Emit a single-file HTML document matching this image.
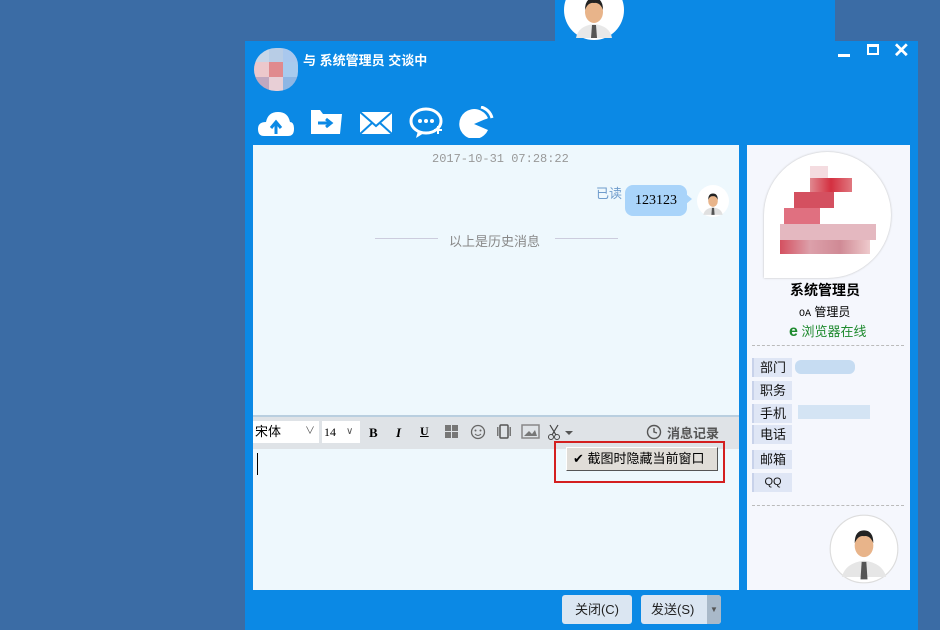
<!DOCTYPE html>
<html><head><meta charset="utf-8"><style>
*{margin:0;padding:0;box-sizing:border-box}
body{width:940px;height:630px;background:#3b6ca5;position:relative;overflow:hidden;font-family:"Liberation Sans","Noto Sans CJK SC",sans-serif;font-size:12px}
.abs{position:absolute}
.blue{background:#0b89e5}
.lbl{position:absolute;left:752px;width:40px;height:19px;background:#dfe6f5;border-left:2px solid #c8d2ea;font-size:13px;text-align:center;line-height:19px;color:#111}
.btn{position:absolute;top:595px;height:29px;background:#dbe6f2;border-radius:3px;font-size:13px;line-height:29px;text-align:center;color:#222}
</style></head><body>
<div class="abs blue" style="left:555px;top:0;width:280px;height:41px"></div>
<div class="abs blue" style="left:245px;top:41px;width:673px;height:589px"></div>
<!-- top avatar -->
<svg class="abs" style="left:564px;top:-20px" width="60" height="62" viewBox="0 0 60 62"><circle cx="30" cy="30" r="30" fill="#fff"/><path d="M12 58 Q14 46 30 44 Q46 46 48 58Z" fill="#e8e8e8"/><path d="M28 45 L32 45 L33 58 L27 58Z" fill="#555"/><ellipse cx="30" cy="32" rx="9" ry="11" fill="#e8b48a"/><path d="M21 30 Q21 18 30 18 Q39 18 39 30 Q36 22 30 23 Q24 22 21 30Z" fill="#222"/></svg>
<!-- window controls -->
<div class="abs" style="left:838px;top:54px;width:12px;height:3px;background:#fff"></div>
<div class="abs" style="left:867px;top:44px;width:12px;height:11px;border:2px solid #fff;border-top-width:3px"></div>
<div class="abs" style="left:893px;top:38px;color:#fff;font-size:20px;font-weight:bold">✕</div>
<!-- title avatar -->
<div class="abs" style="left:254px;top:48px;width:44px;height:43px;border-radius:50% 40% 45% 50%;overflow:hidden;display:grid;grid-template-columns:repeat(3,1fr)">
<div style="background:#c8d6e8"></div><div style="background:#b8cde6"></div><div style="background:#a9c8ee"></div>
<div style="background:#ecc8cc"></div><div style="background:#e08a8e"></div><div style="background:#a8cbee"></div>
<div style="background:#c0a8c0"></div><div style="background:#e8cfd6"></div><div style="background:#8eb6e4"></div></div>
<div class="abs" style="left:303px;top:50px;color:#fff;font-weight:bold;font-size:13px">与 系统管理员 交谈中</div>
<!-- toolbar icons -->
<svg class="abs" style="left:258px;top:106px" width="260" height="32" viewBox="0 0 260 32" fill="#fff">
<path d="M6 30 Q0 30 0 23 Q0 16 8 16 Q10 6 20 6 Q30 6 32 16 Q36 16 36 23 Q36 30 30 30Z"/><path d="M18 28 L18 18 M13 22 L18 16 L23 22" stroke="#0b89e5" stroke-width="3" fill="none"/>
<path d="M53 4 L62 4 L65 8 L84 8 L82 28 L53 28Z"/><path d="M60 17 L72 17 M68 13 L73 17 L68 21" stroke="#0b89e5" stroke-width="3" fill="none"/>
<rect x="102" y="6" width="32" height="22"/><path d="M102 6 L118 20 L134 6 M102 28 L114 17 M134 28 L122 17" stroke="#0b89e5" stroke-width="2" fill="none"/>
<ellipse cx="168" cy="15" rx="15" ry="12" fill="none" stroke="#fff" stroke-width="3"/><path d="M160 25 L158 32 L166 27Z"/><circle cx="162" cy="15" r="2"/><circle cx="168" cy="15" r="2"/><circle cx="174" cy="15" r="2"/><path d="M176 24 L184 24 M180 20 L180 28" stroke="#fff" stroke-width="2"/>
<path d="M216 18 L230 12 A15 15 0 1 0 230 24Z"/><path d="M220 6 A10 10 0 0 1 228 13 M223 1 A15 15 0 0 1 234 12" stroke="#fff" stroke-width="3" fill="none"/>
</svg>
<!-- chat area -->
<div class="abs" style="left:253px;top:145px;width:486px;height:445px;background:#eef8fd"></div>
<div class="abs" style="left:432px;top:152px;color:#999;font-family:'Liberation Mono',monospace;font-size:12px">2017-10-31 07:28:22</div>
<div class="abs" style="left:596px;top:183px;color:#6f9ccc;font-size:13px">已读</div>
<div class="abs" style="left:625px;top:185px;width:62px;height:31px;background:#a9d4fa;border-radius:8px;font-family:'Liberation Serif',serif;font-size:14px;line-height:32px;text-align:center">123123</div>
<div class="abs" style="left:686px;top:194px;border:5px solid transparent;border-left:6px solid #a9d4fa"></div>
<svg class="abs" style="left:697px;top:185px" width="32" height="32" viewBox="0 0 60 60"><circle cx="30" cy="30" r="30" fill="#fff"/><path d="M12 56 Q14 44 30 42 Q46 44 48 56Z" fill="#e0e0e0"/><path d="M28 43 L32 43 L33 56 L27 56Z" fill="#555"/><ellipse cx="30" cy="30" rx="9" ry="11" fill="#e8b48a"/><path d="M21 28 Q21 16 30 16 Q39 16 39 28 Q36 20 30 21 Q24 20 21 28Z" fill="#222"/></svg>
<div class="abs" style="left:375px;top:238px;width:63px;height:1px;background:#ccd"></div>
<div class="abs" style="left:555px;top:238px;width:63px;height:1px;background:#ccd"></div>
<div class="abs" style="left:449px;top:231px;color:#888;font-size:13px">以上是历史消息</div>
<!-- format toolbar -->
<div class="abs" style="left:253px;top:415px;width:486px;height:2px;background:#b9cfe0"></div>
<div class="abs" style="left:253px;top:417px;width:486px;height:32px;background:#dfe3e7"></div>
<div class="abs" style="left:253px;top:421px;width:66px;height:22px;background:#fff;font-size:13px;line-height:22px;padding-left:2px">宋体<span style="position:absolute;left:52px;color:#555;font-size:10px">∨</span></div>
<div class="abs" style="left:322px;top:421px;width:38px;height:22px;background:#fff;font-size:12px;line-height:22px;padding-left:2px;font-family:'Liberation Serif',serif">14<span style="position:absolute;left:24px;color:#555;font-size:10px">∨</span></div>
<div class="abs" style="left:369px;top:425px;font-family:'Liberation Serif',serif;font-weight:bold;font-size:13px">B</div>
<div class="abs" style="left:396px;top:425px;font-family:'Liberation Serif',serif;font-style:italic;font-weight:bold;font-size:13px">I</div>
<div class="abs" style="left:420px;top:424px;font-family:'Liberation Serif',serif;font-weight:bold;font-size:12px;text-decoration:underline">U</div>
<svg class="abs" style="left:444px;top:424px" width="135" height="18" viewBox="0 0 135 18" fill="#777">
<rect x="1" y="1" width="6" height="6"/><rect x="8" y="1" width="6" height="6"/><rect x="1" y="8" width="6" height="6"/><rect x="8" y="8" width="6" height="6"/>
<circle cx="34" cy="8" r="6.5" fill="none" stroke="#666" stroke-width="1.3"/><circle cx="31.5" cy="6.5" r="1" fill="#666"/><circle cx="36.5" cy="6.5" r="1" fill="#666"/><path d="M31 10 Q34 13 37 10" stroke="#666" fill="none"/>
<rect x="56" y="1" width="8" height="13" rx="1" fill="none" stroke="#555" stroke-width="1.5"/><rect x="53" y="3" width="1.5" height="9"/><rect x="65.5" y="3" width="1.5" height="9"/>
<rect x="78" y="1" width="17" height="13" fill="none" stroke="#888" stroke-width="1.5"/><path d="M80 12 L85 7 L88 10 L91 6 L93 12Z"/>
<circle cx="107" cy="13" r="2.5" fill="none" stroke="#444"/><circle cx="113" cy="13" r="2.5" fill="none" stroke="#444"/><path d="M108 11 L114 1 M112 11 L106 1" stroke="#444" stroke-width="1.2"/><path d="M121 7 L129 7 L125 11Z" fill="#555"/>
</svg>
<svg class="abs" style="left:646px;top:424px" width="16" height="16"><circle cx="8" cy="8" r="6.5" fill="none" stroke="#555" stroke-width="1.4"/><path d="M8 4 L8 8 L11 9" stroke="#555" fill="none" stroke-width="1.4"/></svg>
<div class="abs" style="left:667px;top:423px;color:#555;font-size:13px;font-weight:bold">消息记录</div>
<div class="abs" style="left:257px;top:453px;width:1px;height:22px;background:#000"></div>
<!-- popup -->
<div class="abs" style="left:554px;top:441px;width:171px;height:42px;border:2px solid #d42020"></div>
<div class="abs" style="left:566px;top:447px;width:152px;height:24px;background:#e0ddd8;border:1px solid #fff;border-right-color:#555;border-bottom-color:#555;font-size:13px;line-height:22px;padding-left:6px">✔ 截图时隐藏当前窗口</div>
<!-- right panel -->
<div class="abs" style="left:747px;top:145px;width:163px;height:445px;background:#f5f7fd"></div>
<div class="abs" style="left:764px;top:152px;width:127px;height:126px;border-radius:50% 50% 50% 0;background:#fff;box-shadow:0 0 2px #bbb;overflow:hidden">
<div class="abs" style="left:46px;top:14px;width:18px;height:12px;background:#f4dce0"></div>
<div class="abs" style="left:46px;top:26px;width:42px;height:14px;background:linear-gradient(90deg,#e08890,#d43040,#e07880)"></div>
<div class="abs" style="left:30px;top:40px;width:40px;height:16px;background:#d45060"></div>
<div class="abs" style="left:20px;top:56px;width:36px;height:16px;background:#e07080"></div>
<div class="abs" style="left:16px;top:72px;width:96px;height:16px;background:#e4b8c0"></div>
<div class="abs" style="left:16px;top:88px;width:90px;height:14px;background:linear-gradient(90deg,#d45060,#dca0aa,#d08a95,#eecacc)"></div>
</div>
<div class="abs" style="left:790px;top:280px;font-weight:bold;font-size:14px">系统管理员</div>
<div class="abs" style="left:799px;top:303px;font-size:12px"><span style="font-family:'Liberation Mono',monospace;font-size:10px">OA</span> 管理员</div>
<div class="abs" style="left:789px;top:321px;color:#1e8a2e;font-size:13px"><b style="font-size:16px;line-height:14px">e</b> 浏览器在线</div>
<div class="abs" style="left:752px;top:345px;width:152px;border-top:1px dashed #bbb"></div>
<div class="lbl" style="top:358px">部门</div><div class="abs" style="left:795px;top:360px;width:60px;height:14px;background:#c6dcf2;border-radius:6px"></div>
<div class="lbl" style="top:381px">职务</div>
<div class="lbl" style="top:404px">手机</div><div class="abs" style="left:798px;top:405px;width:72px;height:14px;background:#d4e4f4"></div>
<div class="lbl" style="top:425px">电话</div>
<div class="lbl" style="top:450px">邮箱</div>
<div class="lbl" style="top:473px;font-size:11px">QQ</div>
<div class="abs" style="left:752px;top:505px;width:152px;border-top:1px dashed #bbb"></div>
<svg class="abs" style="left:829px;top:514px" width="70" height="70" viewBox="0 0 60 60"><circle cx="30" cy="30" r="29" fill="#fff" stroke="#ddd"/><path d="M11 54 Q14 42 30 40 Q46 42 49 54Z" fill="#e6e6e6"/><path d="M28 41 L32 41 L33 56 L27 56Z" fill="#555"/><ellipse cx="30" cy="27" rx="8" ry="10" fill="#e8b48a"/><path d="M22 25 Q22 14 30 14 Q38 14 38 25 Q35 18 30 19 Q25 18 22 25Z" fill="#222"/></svg>
<!-- buttons -->
<div class="btn" style="left:562px;width:70px">关闭(C)</div>
<div class="btn" style="left:641px;width:80px;text-align:left;padding-left:10px">发送(S)<span style="position:absolute;right:0;top:0;width:14px;height:29px;background:#a9b9c9;border-radius:0 3px 3px 0;font-size:8px;text-align:center;color:#555">▼</span></div>
</body></html>
